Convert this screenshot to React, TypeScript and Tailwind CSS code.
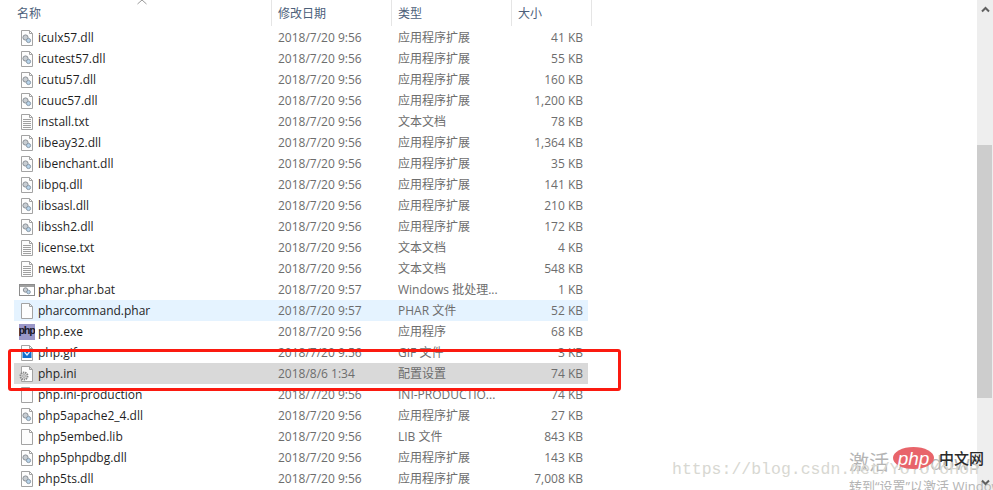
const FONT = "font-['Segoe_UI','Open_Sans','Noto_Sans_CJK_SC',sans-serif]";

type Kind = "dll" | "txt" | "bat" | "blank" | "exe" | "gif" | "ini";

type FileRow = {
  name: string;
  date: string;
  type: string;
  size: string;
  kind: Kind;
  bg?: string;
};

const DLL = "应用程序扩展";
const D = "2018/7/20 9:56";

const files: FileRow[] = [
  { name: "iculx57.dll", date: D, type: DLL, size: "41 KB", kind: "dll" },
  { name: "icutest57.dll", date: D, type: DLL, size: "55 KB", kind: "dll" },
  { name: "icutu57.dll", date: D, type: DLL, size: "160 KB", kind: "dll" },
  { name: "icuuc57.dll", date: D, type: DLL, size: "1,200 KB", kind: "dll" },
  { name: "install.txt", date: D, type: "文本文档", size: "78 KB", kind: "txt" },
  { name: "libeay32.dll", date: D, type: DLL, size: "1,364 KB", kind: "dll" },
  { name: "libenchant.dll", date: D, type: DLL, size: "35 KB", kind: "dll" },
  { name: "libpq.dll", date: D, type: DLL, size: "141 KB", kind: "dll" },
  { name: "libsasl.dll", date: D, type: DLL, size: "210 KB", kind: "dll" },
  { name: "libssh2.dll", date: D, type: DLL, size: "172 KB", kind: "dll" },
  { name: "license.txt", date: D, type: "文本文档", size: "4 KB", kind: "txt" },
  { name: "news.txt", date: D, type: "文本文档", size: "548 KB", kind: "txt" },
  { name: "phar.phar.bat", date: "2018/7/20 9:57", type: "Windows 批处理...", size: "1 KB", kind: "bat" },
  { name: "pharcommand.phar", date: "2018/7/20 9:57", type: "PHAR 文件", size: "52 KB", kind: "blank", bg: "bg-[#e5f3ff]" },
  { name: "php.exe", date: D, type: "应用程序", size: "68 KB", kind: "exe" },
  { name: "php.gif", date: D, type: "GIF 文件", size: "3 KB", kind: "gif" },
  { name: "php.ini", date: "2018/8/6 1:34", type: "配置设置", size: "74 KB", kind: "ini", bg: "bg-[#d9d9d9]" },
  { name: "php.ini-production", date: D, type: "INI-PRODUCTIO...", size: "74 KB", kind: "blank" },
  { name: "php5apache2_4.dll", date: D, type: DLL, size: "27 KB", kind: "dll" },
  { name: "php5embed.lib", date: D, type: "LIB 文件", size: "843 KB", kind: "blank" },
  { name: "php5phpdbg.dll", date: D, type: DLL, size: "143 KB", kind: "dll" },
  { name: "php5ts.dll", date: D, type: DLL, size: "7,008 KB", kind: "dll" },
];

const Page = () => (
  <path d="M0.5 0.5H8.5L11.5 3.5V15.5H0.5Z M8.5 0.5V3.5H11.5" fill="#fdfdfd" stroke="#a3a3a3" strokeWidth="1" />
);

const Gears = () => (
  <g fill="none">
    <circle cx="4.5" cy="7.5" r="2.6" fill="#c8cdd2" stroke="#8a9096" />
    <circle cx="7.5" cy="10.5" r="2.1" fill="#b7d3ea" stroke="#8a9aa8" />
  </g>
);

const FileIcon = ({ kind }: { kind: Kind }) => {
  if (kind === "exe") {
    return (
      <div className="flex h-[16px] w-[16px] items-center justify-center overflow-hidden bg-[#9a97c8]">
        <span className="font-['Liberation_Mono',monospace] text-[11px] font-bold tracking-[-1.2px] text-[#1a1a2a]">php</span>
      </div>
    );
  }
  if (kind === "bat") {
    return (
      <svg width="16" height="16" viewBox="0 0 16 16">
        <rect x="0.5" y="2.5" width="15" height="11" fill="#fff" stroke="#8c8c8c" />
        <rect x="1" y="3" width="14" height="2" fill="#a0a0a0" />
        <circle cx="6.5" cy="8" r="2.2" fill="#c8cdd2" stroke="#8a9096" />
        <circle cx="9.5" cy="10" r="1.8" fill="#b7d3ea" stroke="#8a9aa8" />
      </svg>
    );
  }
  return (
    <svg className="overflow-visible" width="12" height="16" viewBox="0 0 12 16">
      <Page />
      {kind === "dll" && <Gears />}
      {kind === "txt" && (
        <path d="M2 5.5H10M2 7.5H10M2 9.5H10M2 11.5H10M2 13.5H10" stroke="#a0a0a0" strokeWidth="1" />
      )}
      {kind === "gif" && (
        <g>
          <rect x="1.5" y="5" width="9" height="8" fill="#0f6fd0" />
          <path d="M3.5 7L6 10L8.5 7" stroke="#e8f2fc" strokeWidth="1.2" fill="none" />
        </g>
      )}
      {kind === "ini" && (
        <g>
          <circle cx="3" cy="10" r="3.6" fill="#d8d8d8" stroke="#8a8a8a" strokeWidth="1.8" strokeDasharray="1.4 0.8" />
          <circle cx="3" cy="10" r="1.3" fill="#f4f4f4" stroke="#8a8a8a" strokeWidth="0.7" />
        </g>
      )}
    </svg>
  );
};

const Row = ({ file }: { file: FileRow }) => (
  <div className={`flex h-[21px] w-[574px] items-center text-[12px] text-[#6d6d6d] ${file.bg ?? ""}`}>
    <div className="flex w-[24px] shrink-0 justify-center pl-[1px]">
      <FileIcon kind={file.kind} />
    </div>
    <div className="w-[240px] shrink-0 text-[#1f1f1f]">{file.name}</div>
    <div className="w-[120px] shrink-0">{file.date}</div>
    <div className="w-[110px] shrink-0 whitespace-nowrap">{file.type}</div>
    <div className="w-[75px] shrink-0 text-right">{file.size}</div>
  </div>
);

const HeaderCell = ({ label, width }: { label: string; width: string }) => (
  <div className={`flex h-[26px] items-center border-r border-[#e5e5e5] pl-[6px] pt-[2px] text-[12px] text-[#4c607a] ${width}`}>
    {label}
  </div>
);

export default function App() {
  return (
    <div className={`relative flex h-[490px] w-[993px] overflow-hidden bg-white ${FONT}`}>
      <div className="w-[977px]">
        <div className="relative flex">
          <div className="flex h-[26px] w-[272px] items-center border-r border-[#e5e5e5] pl-[17px] pt-[2px] text-[12px] text-[#4c607a]">
            名称
          </div>
          <HeaderCell label="修改日期" width="w-[120px]" />
          <HeaderCell label="类型" width="w-[120px]" />
          <HeaderCell label="大小" width="w-[80px]" />
          <svg className="absolute left-[136px] top-[-1px]" width="12" height="6" viewBox="0 0 12 6">
            <path d="M1.5 5L6 1L10.5 5" fill="none" stroke="#9a9a9a" />
          </svg>
        </div>
        <div className="ml-[14px] mt-[1px]">
          {files.map((file) => (
            <Row key={file.name} file={file} />
          ))}
        </div>
      </div>

      <div className="flex h-[490px] w-[16px] flex-col bg-[#eeeeee]">
        <div className="flex h-[145px] shrink-0 justify-center pt-[6px]">
          <svg width="9" height="7" viewBox="0 0 9 7">
            <path d="M1 5.5L4.5 2L8 5.5" fill="none" stroke="#606060" strokeWidth="2" />
          </svg>
        </div>
        <div className="h-[253px] w-[15px] bg-[#cdcdcd]" />
      </div>

      {/* red annotation box drawn over the list */}
      <div className="absolute left-[8px] top-[349px] h-[42px] w-[613px] rounded-[3px] border-[3px] border-[#fb1a10]" />

      {/* watermarks */}
      <div className="absolute left-[849px] top-[449px] whitespace-nowrap text-[20px] leading-[28px] text-[#b4b4b4]">
        激活 Windows
      </div>
      <div className="absolute left-[849px] top-[477px] whitespace-nowrap text-[13px] leading-[18px] text-[#b4b4b4]">
        转到“设置”以激活 Windows
      </div>
      <div className="absolute left-[672px] top-[461px] whitespace-nowrap font-['Liberation_Mono',monospace] text-[16.5px] leading-[18px] text-[#d8d8d2]">
        https://blog.csdn.net/YoYoYoHoH
      </div>
      <div className="absolute left-[893px] top-[447px] flex h-[22px] w-[41px] items-center justify-center rounded-[50%] bg-[#e8646a]">
        <span className="font-['Liberation_Sans',sans-serif] text-[19px] italic leading-none text-white">php</span>
      </div>
      <div className="absolute left-[939px] top-[448px] whitespace-nowrap text-[15px] font-medium leading-[20px] text-[#2a2a2a]">
        中文网
      </div>
      <svg className="absolute left-[981px] top-[479px]" width="9" height="7" viewBox="0 0 9 7">
        <path d="M1 1.5L4.5 5L8 1.5" fill="none" stroke="#606060" strokeWidth="2" />
      </svg>
    </div>
  );
}
